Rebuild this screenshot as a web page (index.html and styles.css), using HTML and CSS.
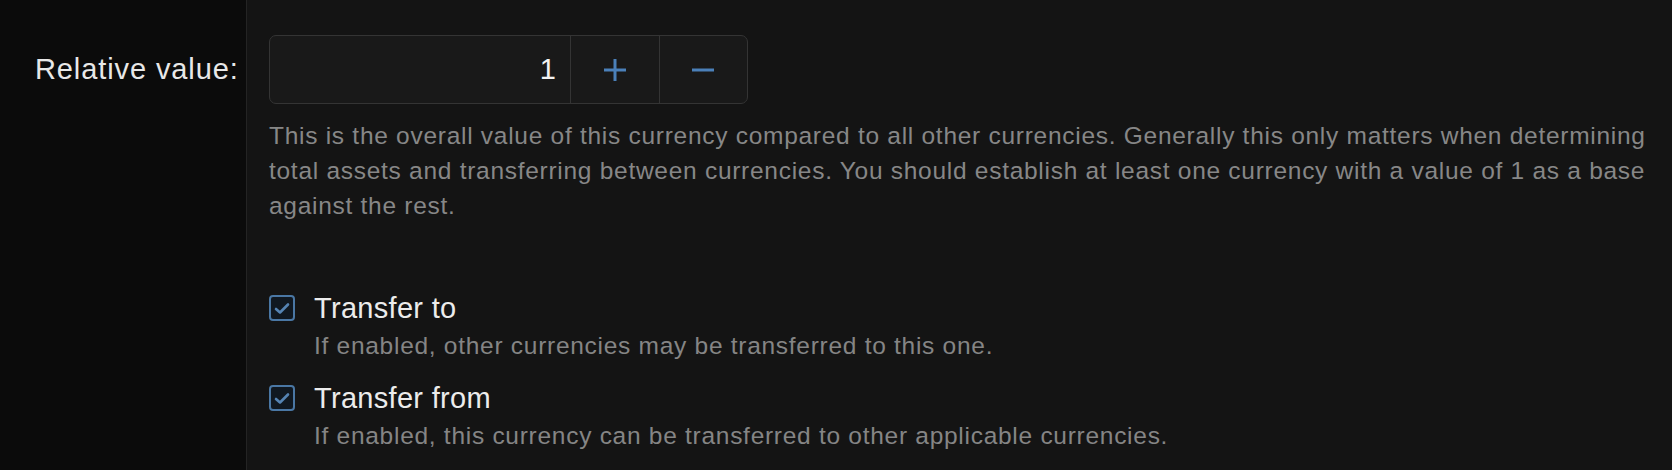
FILE: index.html
```html
<!DOCTYPE html>
<html lang="en">
<head>
<meta charset="utf-8">
<title>Currency settings</title>
<link rel="stylesheet" href="styles.css">
</head>
<body>
<div class="layout">
  <aside class="side">
    <div class="label">Relative value:</div>
  </aside>
  <main class="main">
    <div class="stepper">
      <div class="field">1</div>
      <button class="step" type="button" aria-label="Increase">
        <svg width="22" height="22" viewBox="0 0 22 22"><path d="M11 0V22M0 11H22" stroke="currentColor" stroke-width="3"/></svg>
      </button>
      <button class="step" type="button" aria-label="Decrease">
        <svg width="22" height="22" viewBox="0 0 22 22"><path d="M0 11H22" stroke="currentColor" stroke-width="3"/></svg>
      </button>
    </div>
    <p class="help">This is the overall value of this currency compared to all other currencies. Generally this only matters when determining total assets and transferring between currencies. You should establish at least one currency with a value of 1 as a base against the rest.</p>
    <div class="checks">
      <div class="check">
        <span class="box"><svg width="16" height="13" viewBox="0 0 16 13"><path d="M2 7L6 10.5L14 2.5" fill="none" stroke="currentColor" stroke-width="2.6" stroke-linecap="round" stroke-linejoin="round"/></svg></span>
        <div class="check-text">
          <div class="check-title">Transfer to</div>
          <div class="check-desc">If enabled, other currencies may be transferred to this one.</div>
        </div>
      </div>
      <div class="check">
        <span class="box"><svg width="16" height="13" viewBox="0 0 16 13"><path d="M2 7L6 10.5L14 2.5" fill="none" stroke="currentColor" stroke-width="2.6" stroke-linecap="round" stroke-linejoin="round"/></svg></span>
        <div class="check-text">
          <div class="check-title">Transfer from</div>
          <div class="check-desc">If enabled, this currency can be transferred to other applicable currencies.</div>
        </div>
      </div>
    </div>
  </main>
</div>
</body>
</html>
```
FILE: styles.css
```css
* { box-sizing: border-box; }
html, body {
  margin: 0;
  height: 100%;
  background: #141414;
  font-family: "Liberation Sans", Arial, sans-serif;
  overflow: hidden;
}
.layout {
  display: grid;
  grid-template-columns: 247px 1fr;
  height: 470px;
}
.side {
  background: #0b0b0b;
  border-right: 1px solid #242424;
  padding-top: 35px;
}
.label {
  height: 69px;
  display: flex;
  align-items: center;
  padding-left: 35px;
  color: #e8e8e8;
  font-size: 29px;
  letter-spacing: 0.9px;
}
.main {
  padding: 35px 16px 0 22px;
}
.stepper {
  display: flex;
  width: 479px;
  height: 69px;
  border: 1px solid #343434;
  border-radius: 7px;
  background: #191919;
  overflow: hidden;
}
.field {
  width: 301px;
  display: flex;
  align-items: center;
  justify-content: flex-end;
  padding-right: 14px;
  color: #f2f2f2;
  font-size: 29px;
  border-right: 1px solid #343434;
}
.step {
  flex: 1;
  border: 0;
  background: transparent;
  color: #4b80b9;
  display: flex;
  align-items: center;
  justify-content: center;
  padding: 0;
}
.step + .step { border-left: 1px solid #343434; }
.help {
  margin: 14px 0 0;
  color: #878787;
  font-size: 24.5px;
  letter-spacing: 0.72px;
  line-height: 35px;
}
.checks {
  margin-top: 66px;
  display: flex;
  flex-direction: column;
  gap: 14px;
}
.check {
  display: flex;
  gap: 19px;
}
.box {
  flex: none;
  width: 26px;
  height: 26px;
  margin-top: 6px;
  border: 2px solid #4a77a4;
  border-radius: 4px;
  background: #101821;
  color: #5584b4;
  display: flex;
  align-items: center;
  justify-content: center;
}
.check-title {
  color: #ececec;
  font-size: 29px;
  letter-spacing: 0.3px;
  line-height: 38px;
}
.check-desc {
  color: #858585;
  font-size: 24.5px;
  letter-spacing: 0.72px;
  line-height: 38px;
}
```
